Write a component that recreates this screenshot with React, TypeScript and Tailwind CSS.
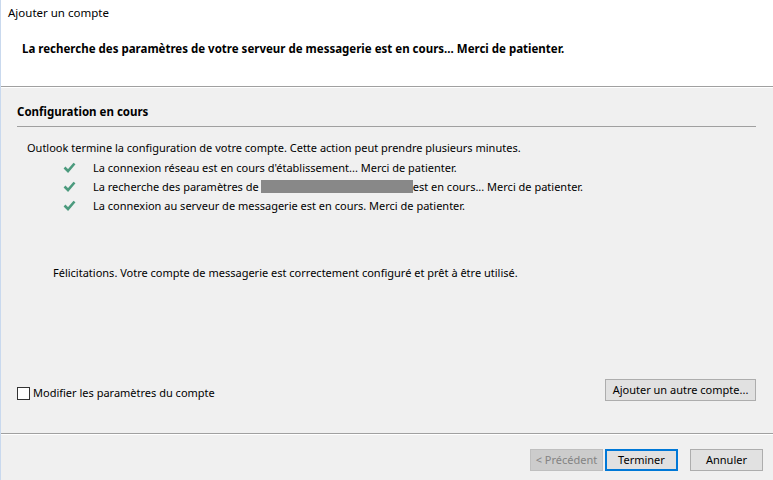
import React from "react";

function Check() {
  return (
    <svg width="13" height="11" viewBox="0 0 13 11" className="shrink-0">
      <path d="M1.5 5.5 L5 9 L11.5 1.5" fill="none" stroke="#4b9a7d" strokeWidth="2.6" />
    </svg>
  );
}

export default function App() {
  const steps = [
    { text: "La connexion réseau est en cours d'établissement... Merci de patienter." },
    { text: "La recherche des paramètres de", redacted: true, after: "est en cours... Merci de patienter." },
    { text: "La connexion au serveur de messagerie est en cours. Merci de patienter." },
  ];

  return (
    <div
      className="flex h-[480px] w-[773px] flex-col overflow-hidden border-l border-[#c9d9ee] bg-[#f0f0f0] text-[11px] text-black"
      style={{ fontFamily: '"Segoe UI", "Noto Sans", sans-serif' }}
    >
      <header className="h-[86px] shrink-0 bg-white">
        <div className="pl-[7px] pt-[4px] text-[11.5px] leading-[18px]">Ajouter un compte</div>
        <h1 className="pl-[21px] pt-[18px] text-[11.5px] font-bold leading-[18px]">
          La recherche des paramètres de votre serveur de messagerie est en cours... Merci de patienter.
        </h1>
      </header>
      <div className="h-px bg-[#a0a0a0]" />
      <div className="h-px bg-white" />

      <main className="flex flex-1 flex-col px-[16px]">
        <h2 className="pt-[15px] text-[11.5px] font-bold leading-[18px]">Configuration en cours</h2>
        <div className="mt-[5px] mr-[1px] h-px bg-[#a0a0a0]" />
        <p className="pl-[10px] pt-[12px] leading-[18px]">
          Outlook termine la configuration de votre compte. Cette action peut prendre plusieurs minutes.
        </p>
        <ul className="mt-[1px] flex flex-col pl-[46px]">
          {steps.map((s, i) => (
            <li key={i} className="flex h-[19px] items-center">
              <Check />
              <span className="ml-[17px] flex items-center leading-[18px]">
                {s.text}
                {s.redacted ? (
                  <>
                    <span className="ml-[2px] inline-block h-[13px] w-[152px] bg-[#888888]" />
                    <span>{s.after}</span>
                  </>
                ) : null}
              </span>
            </li>
          ))}
        </ul>
        <p className="pl-[36px] pt-[49px] leading-[18px]">
          Félicitations. Votre compte de messagerie est correctement configuré et prêt à être utilisé.
        </p>

        <div className="mt-auto mb-[32px] flex items-end justify-between">
          <label className="flex items-center gap-[3px]">
            <span className="h-[13px] w-[13px] border border-[#333333] bg-white" />
            <span className="leading-[16px]">Modifier les paramètres du compte</span>
          </label>
          <button className="mr-[1px] h-[22px] w-[151px] border border-[#adadad] bg-[#e1e1e1]">
            Ajouter un autre compte...
          </button>
        </div>
      </main>

      <div className="h-px bg-[#a0a0a0]" />
      <div className="h-px bg-white" />
      <footer className="flex h-[45px] shrink-0 items-start justify-end pt-[14px] pr-[10px]">
        <button className="h-[22px] w-[73px] border border-[#bfbfbf] bg-[#cccccc] text-[#838383]">
          &lt; Précédent
        </button>
        <button className="ml-[2px] h-[22px] w-[73px] border-2 border-[#0078d7] bg-[#e1e1e1]">
          Terminer
        </button>
        <button className="ml-[12px] h-[22px] w-[73px] border border-[#adadad] bg-[#e1e1e1]">
          Annuler
        </button>
      </footer>
    </div>
  );
}
